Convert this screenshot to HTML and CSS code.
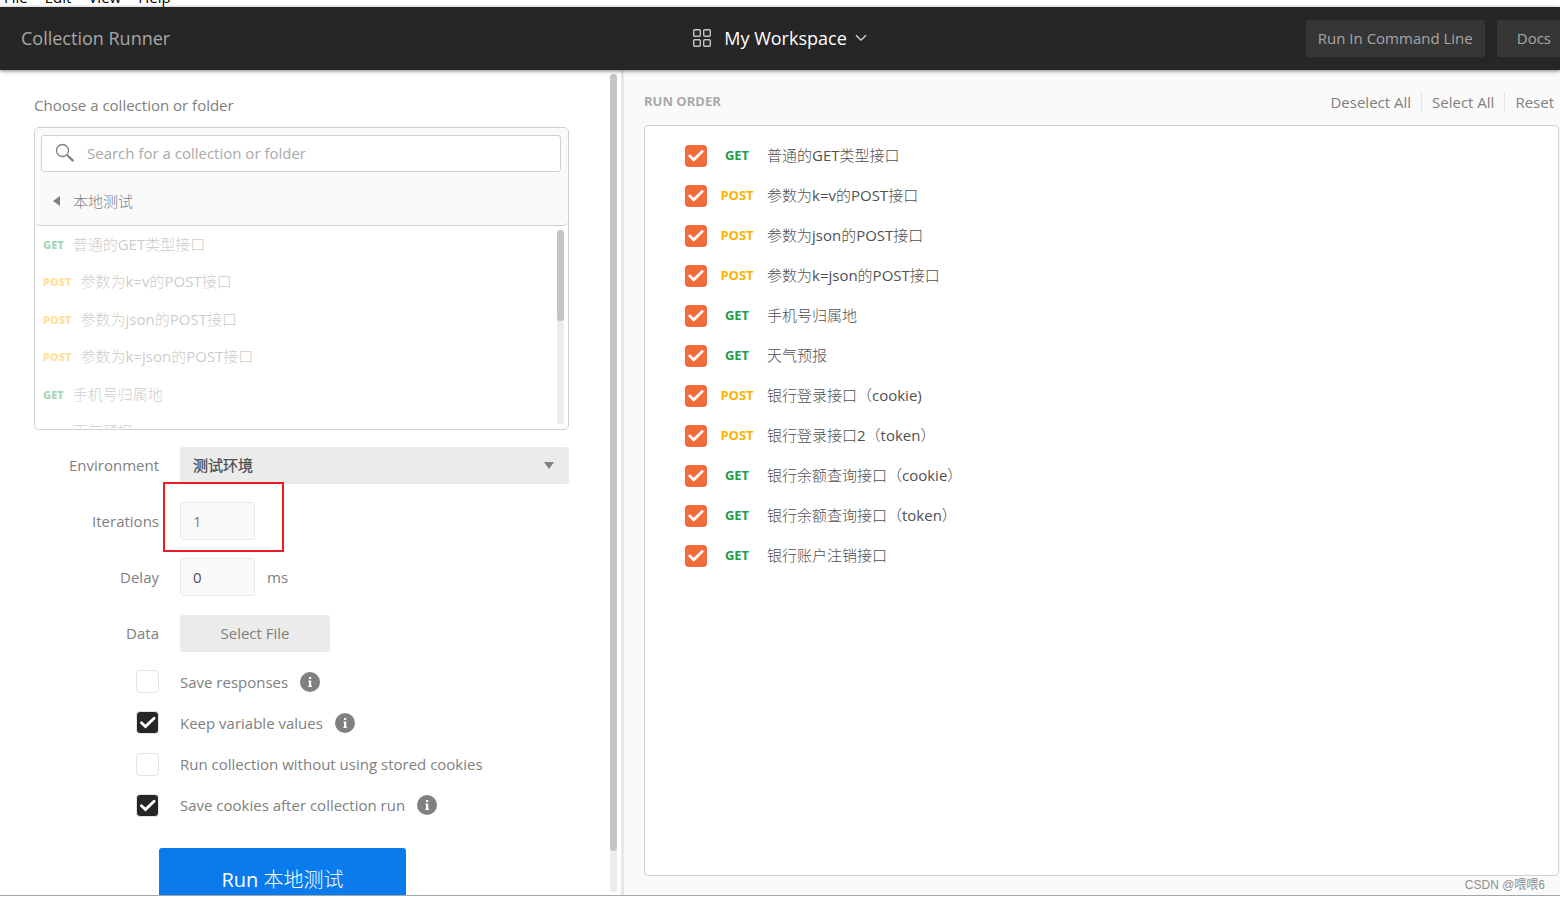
FILE: index.html
```html
<!DOCTYPE html>
<html lang="en">
<head>
<meta charset="utf-8">
<title>Collection Runner</title>
<link rel="stylesheet" href="styles.css">
</head>
<body>
<svg class="defs" aria-hidden="true">
  <symbol id="info" viewBox="0 0 20 20"><circle cx="10" cy="10" r="10" fill="#808080"/><path d="M9 5h2.2v2H9zM8.3 8.4h2.9v5.4h.8v1.2H8.3v-1.2H9V9.6h-.7z" fill="#fff"/></symbol>
</svg>
<nav class="menubar"><span>File</span><span>Edit</span><span>View</span><span>Help</span></nav>
<header class="topbar">
  <h1 class="title">Collection Runner</h1>
  <button class="workspace" type="button">
    <svg width="20" height="20" viewBox="0 0 20 20" fill="none" stroke="#c4c4c4" stroke-width="1.4"><rect x="1.7" y="1.7" width="6.6" height="6.6" rx="1"/><rect x="11.7" y="1.7" width="6.6" height="6.6" rx="1"/><rect x="1.7" y="11.7" width="6.6" height="6.6" rx="1"/><rect x="11.7" y="11.7" width="6.6" height="6.6" rx="1"/></svg>
    <span>My Workspace</span>
    <svg class="chevron" width="12" height="8" viewBox="0 0 12 8" fill="none" stroke="#e0e0e0" stroke-width="1.3"><path d="M1 1.2l5 5 5-5"/></svg>
  </button>
  <div class="top-actions">
    <button class="dark-btn" type="button">Run In Command Line</button>
    <button class="dark-btn docs" type="button">Docs</button>
  </div>
</header>
<main class="panes">
  <section class="setup">
    <div class="setup-body">
      <h2 class="choose">Choose a collection or folder</h2>
      <div class="picker">
        <div class="picker-head">
          <label class="search">
            <svg width="20" height="20" viewBox="0 0 20 20" fill="none" stroke="#808080"><circle cx="7.5" cy="7.5" r="6" stroke-width="1.3"/><path d="M11.8 11.8l2 2" stroke-width="1.3"/><path d="M13 13l5.4 5.2" stroke-width="2.4"/></svg>
            <input type="text" placeholder="Search for a collection or folder" aria-label="Search for a collection or folder">
          </label>
          <button class="back" type="button"><svg width="7" height="10" viewBox="0 0 7 10"><path d="M7 0v10L0 5z" fill="#808080"/></svg>本地测试</button>
        </div>
        <div class="picker-list">
          <ul class="requests">
            <li><b class="get">GET</b>普通的GET类型接口</li>
            <li><b class="post">POST</b>参数为k=v的POST接口</li>
            <li><b class="post">POST</b>参数为json的POST接口</li>
            <li><b class="post">POST</b>参数为k=json的POST接口</li>
            <li><b class="get">GET</b>手机号归属地</li>
            <li><b class="get">GET</b>天气预报</li>
          </ul>
          <div class="track list-track"><div class="thumb"></div></div>
        </div>
      </div>
      <form class="form">
        <div class="field"><label for="env">Environment</label>
          <div class="select-wrap"><select id="env"><option>测试环境</option></select><svg width="10" height="7" viewBox="0 0 10 7"><path d="M0 0h10L5 7z" fill="#808080"/></svg></div></div>
        <div class="field"><label for="iter">Iterations</label>
          <div class="marked"><input id="iter" class="num" type="text" value="1"></div></div>
        <div class="field"><label for="delay">Delay</label><input id="delay" class="num zero" type="text" value="0"><span class="unit">ms</span></div>
        <div class="field"><label for="data">Data</label><button id="data" class="file-btn" type="button">Select File</button></div>
        <div class="options">
          <div class="option"><input type="checkbox" class="check" id="o1"><label for="o1">Save responses</label><svg width="20" height="20"><use href="#info"/></svg></div>
          <div class="option"><input type="checkbox" class="check" id="o2" checked><label for="o2">Keep variable values</label><svg width="20" height="20"><use href="#info"/></svg></div>
          <div class="option"><input type="checkbox" class="check" id="o3"><label for="o3">Run collection without using stored cookies</label></div>
          <div class="option"><input type="checkbox" class="check" id="o4" checked><label for="o4">Save cookies after collection run</label><svg width="20" height="20"><use href="#info"/></svg></div>
        </div>
        <button class="run" type="button">Run 本地测试</button>
      </form>
    </div>
    <div class="track pane-track"><div class="thumb"></div></div>
  </section>
  <section class="order">
    <div class="order-head">
      <h2>RUN ORDER</h2>
      <div class="links"><button type="button">Deselect All</button><button type="button">Select All</button><button type="button">Reset</button></div>
    </div>
    <ul class="order-list">
      <li><input type="checkbox" class="check orange" id="r1" checked><b class="get">GET</b><label for="r1">普通的GET类型接口</label></li>
      <li><input type="checkbox" class="check orange" id="r2" checked><b class="post">POST</b><label for="r2">参数为k=v的POST接口</label></li>
      <li><input type="checkbox" class="check orange" id="r3" checked><b class="post">POST</b><label for="r3">参数为json的POST接口</label></li>
      <li><input type="checkbox" class="check orange" id="r4" checked><b class="post">POST</b><label for="r4">参数为k=json的POST接口</label></li>
      <li><input type="checkbox" class="check orange" id="r5" checked><b class="get">GET</b><label for="r5">手机号归属地</label></li>
      <li><input type="checkbox" class="check orange" id="r6" checked><b class="get">GET</b><label for="r6">天气预报</label></li>
      <li><input type="checkbox" class="check orange" id="r7" checked><b class="post">POST</b><label for="r7">银行登录接口（cookie)</label></li>
      <li><input type="checkbox" class="check orange" id="r8" checked><b class="post">POST</b><label for="r8">银行登录接口2（token）</label></li>
      <li><input type="checkbox" class="check orange" id="r9" checked><b class="get">GET</b><label for="r9">银行余额查询接口（cookie）</label></li>
      <li><input type="checkbox" class="check orange" id="r10" checked><b class="get">GET</b><label for="r10">银行余额查询接口（token）</label></li>
      <li><input type="checkbox" class="check orange" id="r11" checked><b class="get">GET</b><label for="r11">银行账户注销接口</label></li>
    </ul>
    <span class="credit">CSDN @喂喂6</span>
  </section>
</main>
</body>
</html>
```

FILE: styles.css
```css
* { box-sizing: border-box; }
body {
  margin: 0;
  height: 100vh;
  padding-bottom: 5px;
  display: flex;
  flex-direction: column;
  overflow: hidden;
  background: #fff;
  color: #808080;
  font: 15px/20px "Open Sans", "Noto Sans CJK SC Light", "Noto Sans CJK SC", sans-serif;
}
h1, h2, ul { margin: 0; padding: 0; font-weight: 400; }
ul { list-style: none; }
button, input, select { font: inherit; color: inherit; margin: 0; }
button { border: 0; background: none; padding: 0; cursor: pointer; }
svg { flex: none; }
.defs { display: none; }

.menubar {
  flex: none;
  height: 7px;
  padding-left: 4px;
  display: flex;
  gap: 17px;
  align-items: flex-end;
  overflow: hidden;
  color: #000;
  font-size: 15px;
  line-height: 20px;
}

.topbar {
  flex: none;
  z-index: 1;
  height: 63px;
  padding-left: 21px;
  display: grid;
  grid-template-columns: 1fr auto 1fr;
  align-items: center;
  background: #262626;
  box-shadow: 0 1px 4px rgba(0, 0, 0, 0.5);
}
.title { padding-bottom: 2px; font-size: 18px; line-height: 24px; color: #a6a6a6; }
.workspace {
  display: flex;
  align-items: center;
  gap: 12px;
  margin-right: 22px;
  padding-bottom: 2px;
  color: #fff;
  font-size: 18px;
  font-weight: 500;
  line-height: 24px;
}
.chevron { margin-left: -4px; }
.top-actions { display: flex; justify-content: flex-end; gap: 12px; margin-right: -11px; }
.dark-btn {
  height: 37px;
  padding: 0 12px 2px;
  border-radius: 3px;
  background: #363636;
  color: #a6a6a6;
  white-space: nowrap;
}
.docs { padding: 0 20px 2px; }

.panes { flex: 1; min-height: 0; display: flex; border-bottom: 1px solid #a0a8b0; }
.setup {
  flex: none;
  width: 40%;
  padding-right: 4px;
  display: flex;
  border-right: 3px solid #e8e8e8;
  overflow: hidden;
}
.setup-body { flex: 1; min-width: 0; padding: 25px 41px 0 34px; }
.track { flex: none; width: 7px; border-radius: 4px; background: #ececec; }
.thumb { border-radius: 4px; background: #c4c4c4; }
.pane-track { margin: 4px 0 3px; }
.pane-track .thumb { height: 95%; }
.choose { font-size: 15px; line-height: 20px; margin-bottom: 12px; }

.picker { border: 1px solid #d0d0d0; border-radius: 5px; overflow: hidden; }
.picker-head {
  height: 98px;
  padding: 7px 7px 0 6px;
  border-bottom: 1px solid #d0d0d0;
  border-radius: 0 0 5px 5px;
  background: #fafafa;
}
.search {
  height: 37px;
  padding: 0 0 2px 13px;
  display: flex;
  align-items: center;
  gap: 12px;
  border: 1px solid #d0d0d0;
  border-radius: 3px;
  background: #fff;
}
.search input { flex: 1; border: 0; padding: 0; outline: 0; background: none; }
.search input::placeholder { color: #a9a9a9; opacity: 1; }
.back { display: flex; align-items: center; gap: 13px; margin: 19px 0 0 12px; }
.picker-list { height: 202px; margin-bottom: 1px; padding: 0 4px 0 8px; display: flex; overflow: hidden; }
.requests { flex: 1; height: 225px; display: flex; flex-direction: column; opacity: 0.4; }
.requests li { flex: 1; display: flex; align-items: center; gap: 9px; padding-bottom: 2px; }
.requests b { padding-top: 2px; font-size: 11px; font-weight: 800; }
.list-track { margin: 4px 0; }
.list-track .thumb { height: 91px; }
.get { color: #249c47; }
.post { color: #ffb400; }

.form { padding-top: 16px; }
.field { height: 38px; margin-bottom: 18px; display: flex; align-items: center; }
.field > label { width: 125px; margin-right: 21px; text-align: right; }
.select-wrap { flex: 1; position: relative; }
.select-wrap select {
  display: block;
  width: 100%;
  height: 37px;
  padding: 0 13px;
  border: 0;
  border-radius: 3px;
  appearance: none;
  background: #ebebeb;
  color: #505050;
  font-weight: 600;
}
.select-wrap svg { position: absolute; right: 15px; top: 15px; }
.marked { position: relative; }
.marked::after {
  content: "";
  position: absolute;
  inset: -20px -29px -12px -17px;
  border: 2px solid #ed1c24;
  pointer-events: none;
}
.num {
  display: block;
  width: 75px;
  height: 38px;
  padding: 0 12px;
  border: 1px solid #e8e8e8;
  border-radius: 3px;
  background: #fafafa;
}
.zero { color: #505050; }
.unit { margin-left: 12px; }
.file-btn { width: 150px; height: 37px; border-radius: 3px; background: #ebebeb; }

.options {
  height: 147px;
  margin-bottom: 31px;
  padding-left: 102px;
  display: flex;
  flex-direction: column;
  justify-content: space-between;
}
.option { display: flex; align-items: center; height: 23px; }
.option label { margin: 0 12px 0 21px; white-space: nowrap; }
.check {
  flex: none;
  appearance: none;
  width: 23px;
  height: 23px;
  border: 1px solid #e4e4e4;
  border-radius: 4px;
  background: #fff;
}
.check:checked {
  background: #262626 url("data:image/svg+xml,%3Csvg xmlns='http://www.w3.org/2000/svg' viewBox='0 0 22 22'%3E%3Cpath d='M4.8 11l4 3.8 8.4-8.2' fill='none' stroke='%23fff' stroke-width='2.8' stroke-linecap='round'/%3E%3C/svg%3E") center / 22px no-repeat;
}
.check.orange { width: 22px; height: 22px; border: 0; background-color: #f26b3a; }
.run {
  display: block;
  width: 247px;
  height: 64px;
  margin-left: 125px;
  border-radius: 3px;
  background: #097bed;
  color: #fff;
  font-size: 20px;
}

.order {
  flex: 1;
  min-width: 0;
  position: relative;
  padding: 20px 1px 19px 20px;
  display: flex;
  flex-direction: column;
  background: #fafafa;
}
.order-head { display: flex; justify-content: space-between; height: 35px; }
.order-head h2 { color: #a9a9a9; font-size: 13px; font-weight: 700; line-height: 22px; }
.links { display: flex; align-items: center; height: 24px; }
.links button { padding: 0 10px; border-left: 1px solid #e4e4e4; }
.links button:first-child { border-left: 0; }
.links button:last-child { padding-right: 5px; }
.order-list {
  flex: 1;
  padding: 10px 40px;
  border: 1px solid #d0d0d0;
  border-radius: 4px;
  background: #fff;
}
.order-list li { height: 40px; display: flex; align-items: center; color: #505050; }
.order-list b, .order-list label { padding-bottom: 2px; }
.order-list b { width: 60px; text-align: center; font-size: 13px; font-weight: 700; }
.credit {
  position: absolute;
  right: 15px;
  bottom: 0;
  color: #909090;
  font: 12px/20px "Liberation Sans", "Noto Sans CJK SC", sans-serif;
}
```
